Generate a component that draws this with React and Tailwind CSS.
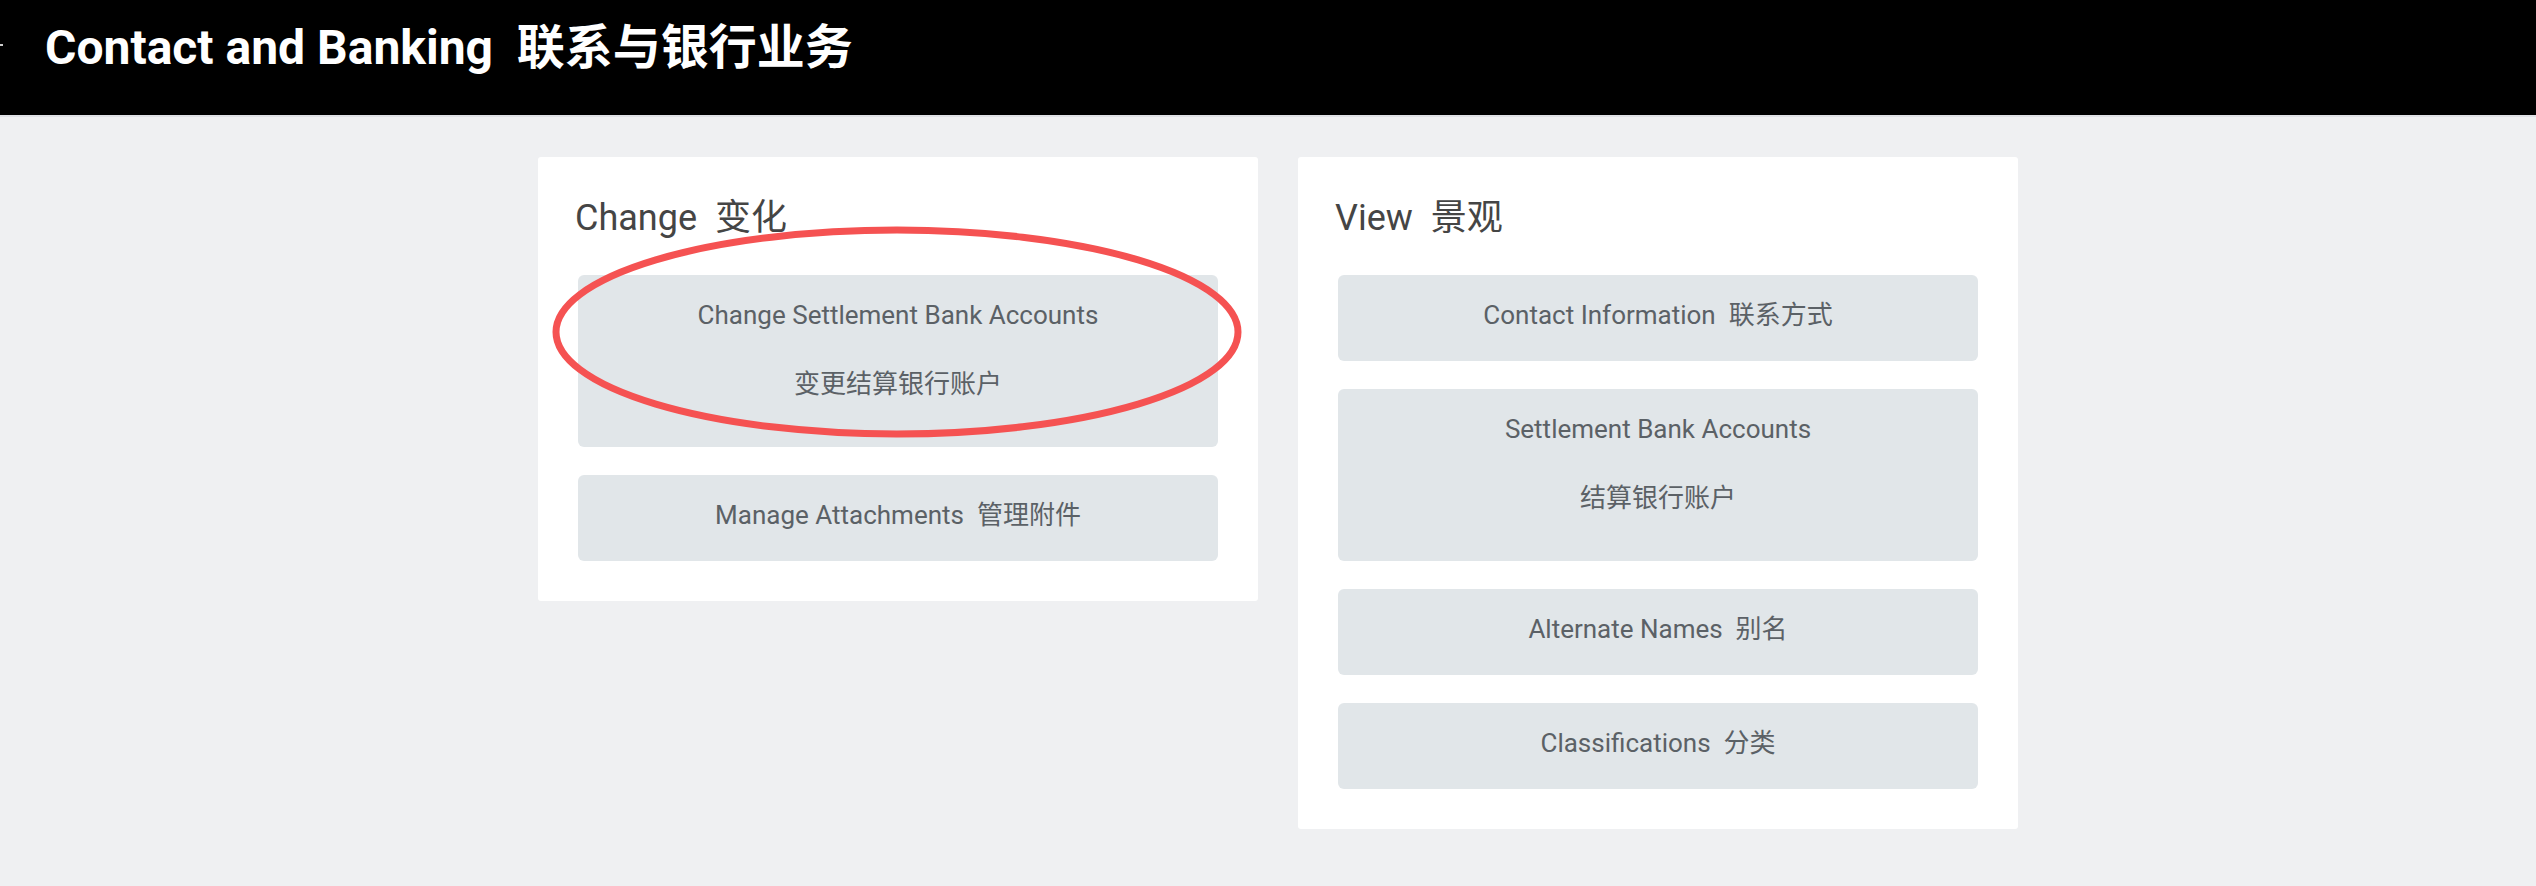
import React from "react";

const font = { fontFamily: 'Roboto, "Noto Sans CJK SC", sans-serif' };

const ActionButton = ({ lines, tall }) => {
  if (tall) {
    return (
      <button className="h-[172px] w-full rounded-[6px] bg-[#e1e6e9] text-[26px] leading-[39px] text-[#5b6166] pt-[21px] flex flex-col items-center">
        <span>{lines[0]}</span>
        <span className="mt-[30px]">{lines[1]}</span>
      </button>
    );
  }
  return (
    <button className="h-[86px] w-full rounded-[6px] bg-[#e1e6e9] text-[26px] leading-[39px] text-[#5b6166] pb-[5px] flex items-center justify-center whitespace-pre">
      {lines[0]}
    </button>
  );
};

const Card = ({ title, children, highlight }) => (
  <section className="relative w-[720px] bg-white rounded-[3px] px-[40px] pt-[40px] pb-[40px]">
    <h2 className="text-[36px] leading-[43px] text-[#454545] mb-[35px] -ml-[3px] whitespace-pre">{title}</h2>
    <div className="flex flex-col gap-[28px]">{children}</div>
    {highlight && (
      <svg
        className="absolute left-0 top-0 pointer-events-none overflow-visible"
        width="720"
        height="445"
        viewBox="0 0 720 445"
      >
        <ellipse cx="359" cy="175" rx="341" ry="102" fill="none" stroke="#f55252" strokeWidth="7" />
      </svg>
    )}
  </section>
);

export default function App() {
  return (
    <div className="min-h-screen bg-[#eff0f2]" style={font}>
      <header className="relative h-[117px] bg-black border-b-2 border-[#dfe1e6] pl-[45px] pt-[20px]">
        <div className="absolute left-0 top-[44px] w-[3px] h-[2px] bg-[#cccccc]" />
        <h1 className="text-[48px] leading-[56px] font-bold text-white whitespace-pre">
          {"Contact and Banking  联系与银行业务"}
        </h1>
      </header>

      <main className="flex justify-center items-start gap-[40px] pt-[40px] pl-[20px] pb-[56px]">
        <Card title={"Change  变化"} highlight>
          <ActionButton tall lines={["Change Settlement Bank Accounts", "变更结算银行账户"]} />
          <ActionButton lines={["Manage Attachments  管理附件"]} />
        </Card>

        <Card title={"View  景观"}>
          <ActionButton lines={["Contact Information  联系方式"]} />
          <ActionButton tall lines={["Settlement Bank Accounts", "结算银行账户"]} />
          <ActionButton lines={["Alternate Names  别名"]} />
          <ActionButton lines={["Classifications  分类"]} />
        </Card>
      </main>
    </div>
  );
}
